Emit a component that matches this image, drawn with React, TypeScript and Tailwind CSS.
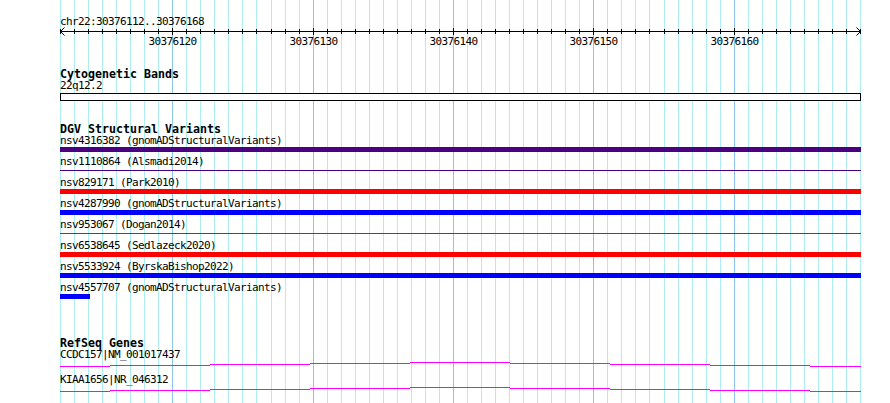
const PX_PER_BP = 800 / 57;
const cols = Array.from({ length: 58 }, (_, k) => Math.round(60 + k * PX_PER_BP));
const majors = [8, 18, 28, 38, 48];
const startBp = 30376112;

type Variant = { name: string; color: string; kind: "bar" | "line" | "short" };

const variants: Variant[] = [
  { name: "nsv4316382 (gnomADStructuralVariants)", color: "bg-[#4b0082]", kind: "bar" },
  { name: "nsv1110864 (Alsmadi2014)", color: "bg-[#4b0082]", kind: "line" },
  { name: "nsv829171 (Park2010)", color: "bg-[#ff0000]", kind: "bar" },
  { name: "nsv4287990 (gnomADStructuralVariants)", color: "bg-[#0000ff]", kind: "bar" },
  { name: "nsv953067 (Dogan2014)", color: "bg-[#ff0000]", kind: "line" },
  { name: "nsv6538645 (Sedlazeck2020)", color: "bg-[#ff0000]", kind: "bar" },
  { name: "nsv5533924 (ByrskaBishop2022)", color: "bg-[#0000ff]", kind: "bar" },
  { name: "nsv4557707 (gnomADStructuralVariants)", color: "bg-[#0000ff]", kind: "short" },
];

const genes = ["CCDC157|NM_001017437", "KIAA1656|NR_046312"];

// intron hat: y per 100px step, first/last step is 50px
const hat = [
  [0, 50, 6.5],
  [50, 150, 5.5],
  [150, 250, 4.5],
  [250, 350, 3.5],
  [350, 450, 2.5],
  [450, 550, 3.5],
  [550, 650, 4.5],
  [650, 750, 5.5],
  [750, 801, 6.5],
];

const small = "text-[11px] leading-[11px] tracking-[-0.62px] whitespace-nowrap";

function Grid() {
  return (
    <svg className="absolute inset-0" width={890} height={403} shapeRendering="crispEdges">
      {cols.map((x, k) => (
        <line
          key={k}
          x1={x + 0.5}
          x2={x + 0.5}
          y1={0}
          y2={403}
          stroke={majors.includes(k) ? "#8cc6ea" : "#aeeef0"}
          strokeWidth={1}
        />
      ))}
    </svg>
  );
}

function Ruler() {
  return (
    <div className="relative h-[50px]">
      <div className={`pt-[16px] ${small}`}>chr22:30376112..30376168</div>
      <svg className="absolute left-[-60px] top-0" width={890} height={50} shapeRendering="crispEdges">
        <line x1={60} x2={861} y1={31.5} y2={31.5} stroke="#000" />
        {cols.map((x, k) => (
          <line
            key={k}
            x1={x + 0.5}
            x2={x + 0.5}
            y1={majors.includes(k) ? 28 : 29}
            y2={majors.includes(k) ? 35 : 34}
            stroke="#000"
          />
        ))}
        <path d="M60.5 31.5 L64.5 27.5 M60.5 31.5 L64.5 35.5" stroke="#000" fill="none" shapeRendering="auto" />
        <path d="M860.5 31.5 L856.5 27.5 M860.5 31.5 L856.5 35.5" stroke="#000" fill="none" shapeRendering="auto" />
      </svg>
      {majors.map((k) => (
        <span
          key={k}
          className={`absolute top-[36px] w-[48px] text-center ${small}`}
          style={{ left: cols[k] - 60 - 23.5 }}
        >
          {startBp + k}
        </span>
      ))}
    </div>
  );
}

function TrackTitle({ children, className = "" }: { children: string; className?: string }) {
  return <div className={`text-[11.63px] font-bold leading-[12px] ${className}`}>{children}</div>;
}

export default function App() {
  return (
    <div className="relative h-[403px] w-[890px] overflow-hidden bg-white text-black font-['DejaVu_Sans_Mono',monospace]">
      <Grid />
      <div className="relative ml-[60px] w-[801px]">
        <Ruler />

        <TrackTitle className="mt-[18px]">Cytogenetic Bands</TrackTitle>
        <div className={small}>22q12.2</div>
        <div className="mt-[2px] h-[8px] border border-black bg-white" />

        <TrackTitle className="mt-[22px]">DGV Structural Variants</TrackTitle>
        {variants.map((v) => (
          <div key={v.name} className="h-[21px]">
            <div className={small}>{v.name}</div>
            {v.kind === "line" ? (
              <div className="mt-[1px] h-[5px] pt-[2px]">
                <div className={`h-px ${v.color}`} />
              </div>
            ) : (
              <div className={`mt-[1px] h-[5px] ${v.kind === "short" ? "w-[30px]" : "w-full"} ${v.color}`} />
            )}
          </div>
        ))}

        <TrackTitle className="mt-[34px]">RefSeq Genes</TrackTitle>
        {genes.map((g) => (
          <div key={g} className="h-[25px]">
            <div className={small}>{g}</div>
            <svg width={801} height={14} className="block" shapeRendering="crispEdges">
              {hat.map(([a, b, y], i) => (
                <line key={i} x1={a} x2={b} y1={y} y2={y} stroke="#ff00ff" strokeWidth={1} />
              ))}
            </svg>
          </div>
        ))}
      </div>
    </div>
  );
}
